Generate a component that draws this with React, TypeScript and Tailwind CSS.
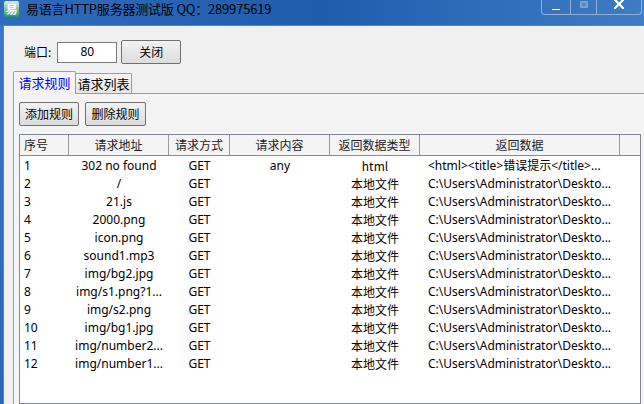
import React from 'react';

type Row = {
  id: string;
  path: string;
  method: string;
  body: string;
  kind: string;
  data: string;
};

const DESK = 'C:\\Users\\Administrator\\Deskto...';

const rows: Row[] = [
  { id: '1', path: '302 no found', method: 'GET', body: 'any', kind: 'html', data: '<html><title>错误提示</title>...' },
  { id: '2', path: '/', method: 'GET', body: '', kind: '本地文件', data: DESK },
  { id: '3', path: '21.js', method: 'GET', body: '', kind: '本地文件', data: DESK },
  { id: '4', path: '2000.png', method: 'GET', body: '', kind: '本地文件', data: DESK },
  { id: '5', path: 'icon.png', method: 'GET', body: '', kind: '本地文件', data: DESK },
  { id: '6', path: 'sound1.mp3', method: 'GET', body: '', kind: '本地文件', data: DESK },
  { id: '7', path: 'img/bg2.jpg', method: 'GET', body: '', kind: '本地文件', data: DESK },
  { id: '8', path: 'img/s1.png?1...', method: 'GET', body: '', kind: '本地文件', data: DESK },
  { id: '9', path: 'img/s2.png', method: 'GET', body: '', kind: '本地文件', data: DESK },
  { id: '10', path: 'img/bg1.jpg', method: 'GET', body: '', kind: '本地文件', data: DESK },
  { id: '11', path: 'img/number2...', method: 'GET', body: '', kind: '本地文件', data: DESK },
  { id: '12', path: 'img/number1...', method: 'GET', body: '', kind: '本地文件', data: DESK },
];

const cjk = { fontFamily: '"Noto Sans CJK SC", sans-serif' };
const ui = { fontFamily: '"Noto Sans", "Noto Sans CJK SC", sans-serif' };

const WinButton: React.FC<{ label: string; className?: string }> = ({ label, className = '' }) => (
  <button
    className={`h-[24px] border border-[#707070] rounded-[2px] bg-gradient-to-b from-[#f2f2f2] to-[#dcdcdc] text-[12px] text-black leading-none ${className}`}
    style={cjk}
  >
    {label}
  </button>
);

export default function App() {
  return (
    <div className="w-[644px] h-[404px] overflow-hidden bg-gradient-to-b from-[#3a78c8] to-[#2a65b3] flex flex-col select-none">
      {/* title bar */}
      <div className="h-[25px] shrink-0 flex items-start bg-gradient-to-r from-[#2f6cbd] via-[#1f5cae] to-[#3f7cc4]">
        <div className="mt-[1px] ml-[4px] w-[15px] h-[16px] rounded-[2px] bg-gradient-to-b from-[#d8f0e6] to-[#14956a] flex items-center justify-center">
          <span className="text-[12px] leading-none text-white font-bold" style={cjk}>易</span>
        </div>
        <div className="ml-[7px] mt-[1px] text-[13px] leading-[16px] text-black tracking-[-0.2px]" style={cjk}>
          易语言HTTP服务器测试版 QQ：289975619
        </div>
        <div className="ml-auto mr-[2px] flex h-[15px] border border-t-0 border-[#8fb0d8] rounded-b-[4px] overflow-hidden">
          <div className="w-[29px] flex items-center justify-center border-r border-[#8fb0d8]">
            <div className="w-[10px] h-[3px] bg-white mt-[4px] border border-[#4a6f9c]" />
          </div>
          <div className="w-[26px] flex items-start justify-center border-r border-[#8fb0d8]">
            <div className="w-[8px] h-[7px] mt-[1px] border-[2px] border-[#7f9fcc] bg-[#5c82bd]" />
          </div>
          <div className="w-[44px] flex items-start justify-center">
            <svg width="10" height="9" viewBox="0 0 10 9" className="mt-[0px]">
              <path d="M1 0 L9 8 M9 0 L1 8" stroke="#ffffff" strokeWidth="2.2" strokeLinecap="square" />
            </svg>
          </div>
        </div>
      </div>

      {/* client area */}
      <div className="flex-1 ml-[3px] border-l border-t border-[#6d7f96] bg-[#f0f0f0] flex flex-col">
        <div className="flex items-center mt-[14px] ml-[20px]">
          <span className="text-[12px] text-black mr-[6px]" style={cjk}>端口:</span>
          <div className="w-[60px] h-[21px] border border-[#7a7a7a] bg-white flex items-center justify-center text-[12px] text-black" style={ui}>
            80
          </div>
          <WinButton label="关闭" className="ml-[4px] w-[60px]" />
        </div>

        {/* tabs */}
        <div className="mt-[6px] ml-[9px] flex items-end h-[23px]">
          <div className="w-[63px] h-[23px] border border-b-0 border-[#8e9fb5] rounded-t-[2px] bg-[#f4f4f4] flex items-center justify-center text-[13px] text-[#0000ff] relative z-10 -mb-px" style={cjk}>
            请求规则
          </div>
          <div className="w-[56px] h-[20px] border border-l-0 border-b-0 border-[#8e9fb5] rounded-tr-[2px] bg-gradient-to-b from-[#f6f6f6] to-[#e6e6e6] flex items-center justify-center text-[13px] text-black" style={cjk}>
            请求列表
          </div>
        </div>

        <div className="flex-1 ml-[9px] border-l border-t border-[#8e9fb5] bg-[#f4f4f4] flex flex-col pl-[5px] pt-[8px]">
          <div className="flex gap-[6px]">
            <WinButton label="添加规则" className="w-[60px]" />
            <WinButton label="删除规则" className="w-[61px]" />
          </div>

          {/* list view */}
          <div className="mt-[8px] w-[622px] flex-1 border border-[#828790] bg-white" style={ui}>
            <div className="flex h-[21px] bg-[#f4f4f4] border-b border-[#8c8c8c] text-[12px] text-[#222]" style={cjk}>
              <div className="w-[49px] pl-[4px] flex items-center border-r border-[#9a9a9a]">序号</div>
              <div className="w-[100px] flex items-center justify-center border-r border-[#9a9a9a]">请求地址</div>
              <div className="w-[61px] flex items-center justify-center border-r border-[#9a9a9a]">请求方式</div>
              <div className="w-[100px] flex items-center justify-center border-r border-[#9a9a9a]">请求内容</div>
              <div className="w-[90px] flex items-center justify-center border-r border-[#9a9a9a]">返回数据类型</div>
              <div className="w-[200px] flex items-center justify-center border-r border-[#9a9a9a]">返回数据</div>
              <div className="flex-1" />
            </div>
            <div className="pt-[1px]">
              {rows.map((r) => (
                <div key={r.id} className="flex h-[18px] items-center text-[12px] text-black whitespace-nowrap">
                  <div className="w-[49px] pl-[4px]">{r.id}</div>
                  <div className="w-[100px] text-center">{r.path}</div>
                  <div className="w-[61px] text-center">{r.method}</div>
                  <div className="w-[100px] text-center">{r.body}</div>
                  <div className="w-[90px] text-center" style={cjk}>{r.kind}</div>
                  <div className="w-[200px] pl-[8px] overflow-hidden">{r.data}</div>
                </div>
              ))}
            </div>
          </div>
        </div>
      </div>
    </div>
  );
}
